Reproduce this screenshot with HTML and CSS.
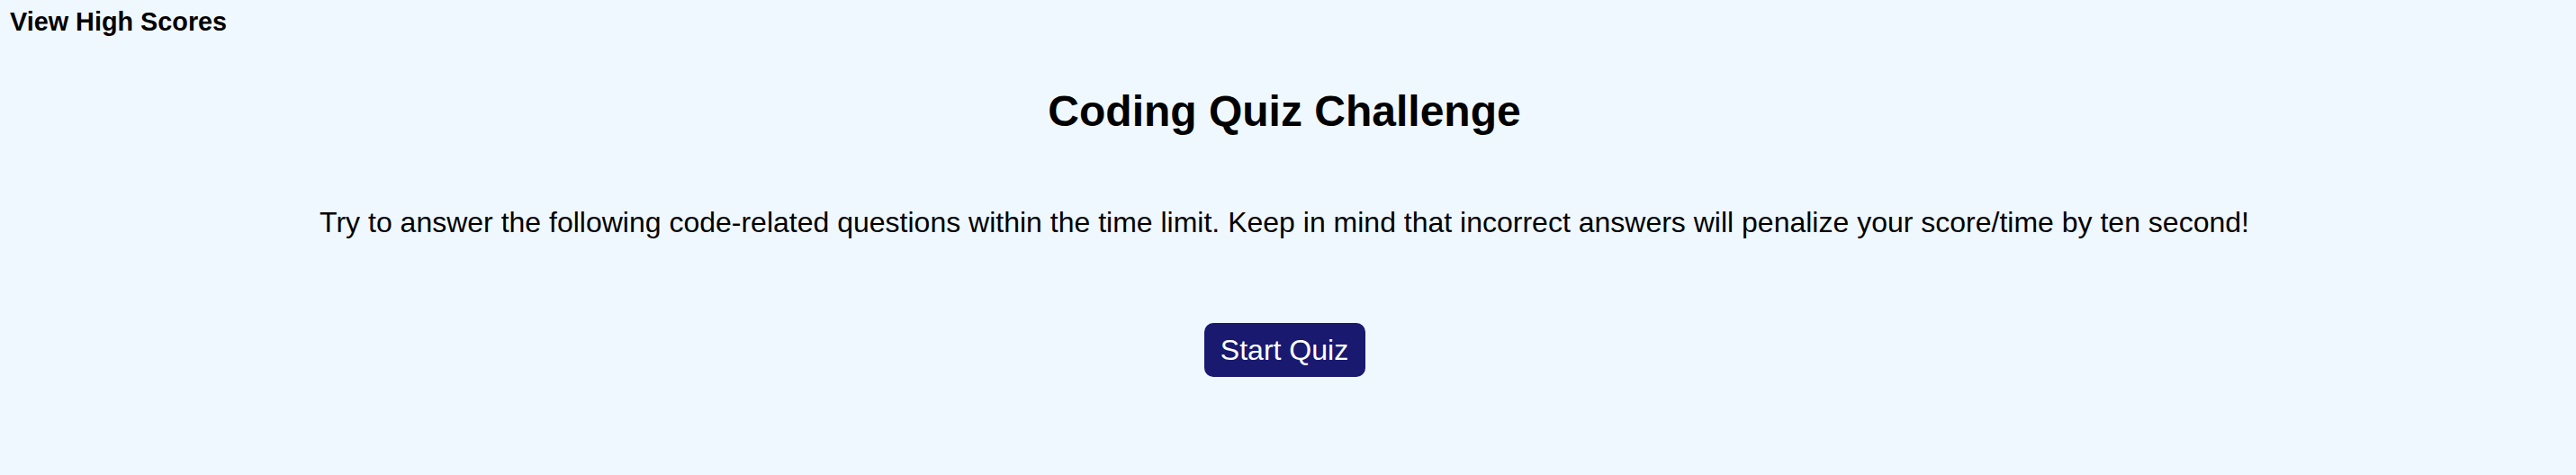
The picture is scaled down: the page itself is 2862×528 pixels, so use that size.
FILE: index.html
```html
<!DOCTYPE html>
<html lang="en">
<head>
<meta charset="utf-8">
<title>Coding Quiz Challenge</title>
<link rel="stylesheet" href="styles.css">
</head>
<body>
<header class="topbar">
  <a class="scores-link">View High Scores</a>
</header>
<main class="intro">
  <h2 class="title">Coding Quiz Challenge</h2>
  <p class="lead">Try to answer the following code-related questions within the time limit. Keep in mind that incorrect answers will penalize your score/time by ten second!</p>
  <button class="start-btn" type="button">Start Quiz</button>
</main>
</body>
</html>
```
FILE: styles.css
```css
html, body {
  margin: 0;
  padding: 0;
}
body {
  background: #f0f8ff;
  color: #000;
  font-family: "Liberation Sans", Arial, Helvetica, sans-serif;
  height: 528px;
  overflow: hidden;
}
.topbar {
  padding: 8px 11px 0;
}
.scores-link {
  font-size: 28.8px;
  font-weight: bold;
  line-height: 33px;
  display: inline-block;
}
.intro {
  display: flex;
  flex-direction: column;
  align-items: center;
  text-align: center;
  padding-right: 8px;
}
.title {
  margin: 55px 0 0;
  font-size: 48px;
  font-weight: bold;
  line-height: 55px;
}
.lead {
  margin: 78px 0 0;
  font-size: 32px;
  line-height: 37px;
}
.start-btn {
  margin-top: 93px;
  font-family: "Liberation Sans", Arial, Helvetica, sans-serif;
  font-size: 32px;
  line-height: 37px;
  color: #fff;
  background: #191970;
  border: none;
  border-radius: 10px;
  padding: 0;
  width: 179px;
  height: 60px;
}
```
